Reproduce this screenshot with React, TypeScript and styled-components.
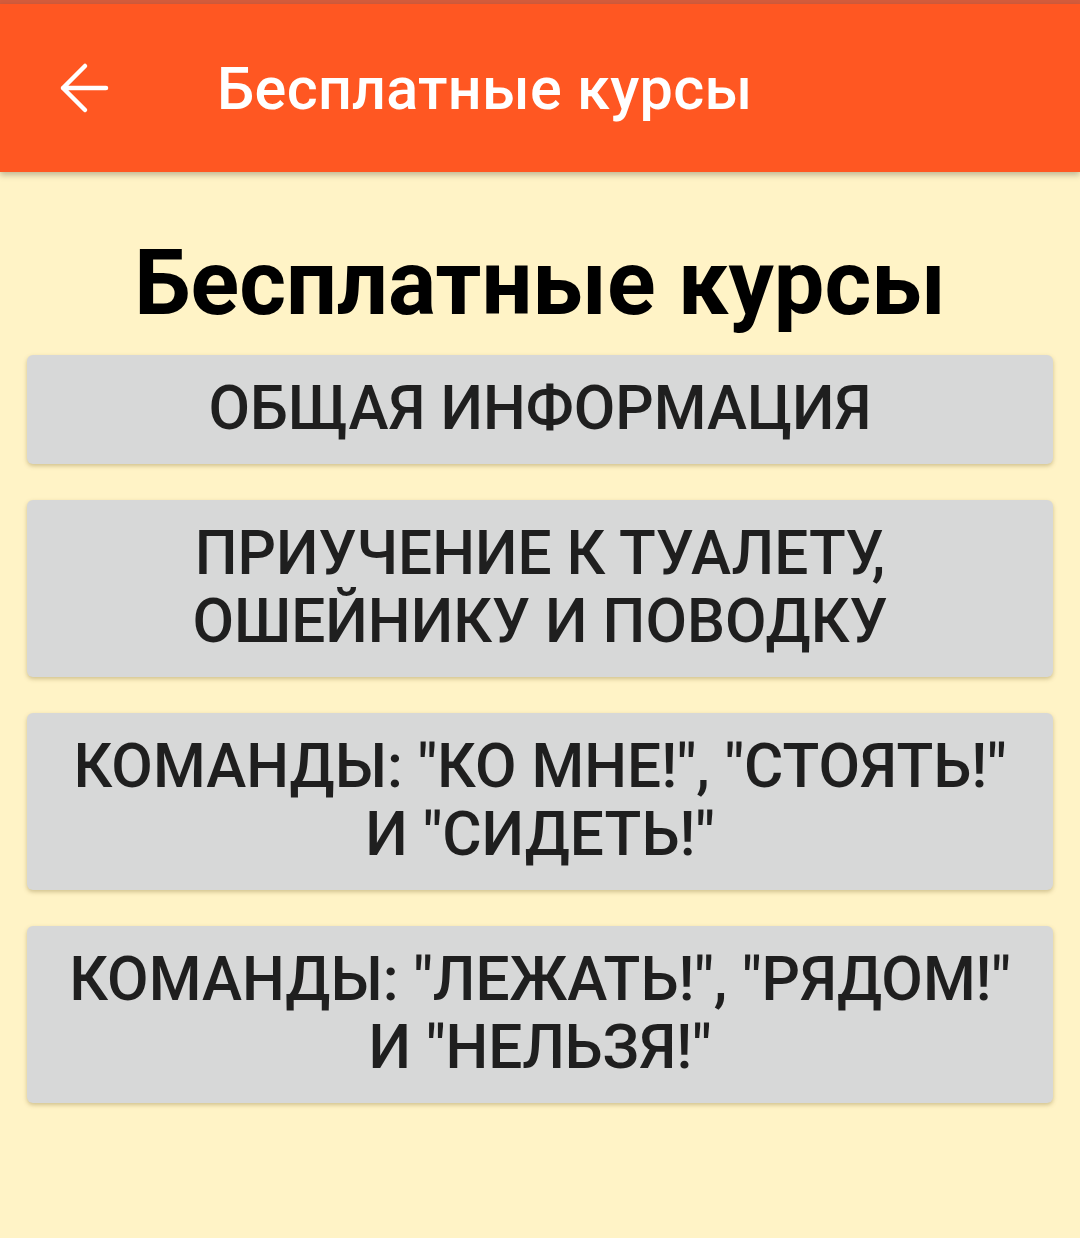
import React from "react";
import styled, { createGlobalStyle } from "styled-components";

const GlobalStyle = createGlobalStyle`
  html, body {
    margin: 0;
    padding: 0;
    background: #fff3c6;
    font-family: Roboto, "Noto Sans", "Liberation Sans", sans-serif;
  }
`;

const Page = styled.div`
  min-height: 1238px;
  background: #fff3c6;
`;

const StatusStrip = styled.div`
  height: 4px;
  background: #d45c3c;
`;

const Toolbar = styled.header`
  height: 168px;
  background: #ff5722;
  display: flex;
  align-items: center;
  box-shadow: 0 3px 6px rgba(0, 0, 0, 0.25);
  position: relative;
  z-index: 1;
`;

const BackButton = styled.button`
  width: 168px;
  height: 100%;
  padding: 0 0 0 58px;
  border: none;
  background: transparent;
  display: flex;
  align-items: center;
  cursor: pointer;
`;

const ToolbarTitle = styled.h1`
  margin: 0 0 0 49px;
  color: #ffffff;
  font-size: 59.3px;
  font-weight: 500;
  letter-spacing: 0.3px;
`;

const Content = styled.main`
  padding: 0 27px;
  display: flex;
  flex-direction: column;
  gap: 36px;
`;

const Heading = styled.h2`
  margin: 62px 0 -15px;
  text-align: center;
  color: #000000;
  font-size: 90px;
  font-weight: 700;
  line-height: 100px;
`;

const CourseButton = styled.button`
  width: 100%;
  padding: 20px 24px 21px;
  border: none;
  border-radius: 6px;
  background: #d7d8d8;
  box-shadow: 0 2px 4px rgba(120, 100, 40, 0.35);
  color: #1f1f1f;
  font-family: inherit;
  font-size: 60.3px;
  font-weight: 500;
  line-height: 68px;
  text-transform: uppercase;
  text-align: center;
  cursor: pointer;
`;

const courses = [
  ["Общая информация"],
  ["Приучение к туалету,", "ошейнику и поводку"],
  ['Команды: "Ко мне!", "Стоять!"', 'и "Сидеть!"'],
  ['Команды: "Лежать!", "Рядом!"', 'и "Нельзя!"'],
];

export default function App() {
  return (
    <Page>
      <GlobalStyle />
      <StatusStrip />
      <Toolbar>
        <BackButton aria-label="Назад">
          <svg width="52" height="52" viewBox="0 0 52 52" fill="none">
            <path
              d="M48 26H5M27 4L5 26l22 22"
              stroke="#fff"
              strokeWidth="4.5"
              strokeLinecap="round"
              strokeLinejoin="round"
            />
          </svg>
        </BackButton>
        <ToolbarTitle>Бесплатные курсы</ToolbarTitle>
      </Toolbar>
      <Content>
        <Heading>Бесплатные курсы</Heading>
        {courses.map((lines, i) => (
          <CourseButton key={i}>
            {lines.map((l, j) => (
              <div key={j}>{l}</div>
            ))}
          </CourseButton>
        ))}
      </Content>
    </Page>
  );
}
